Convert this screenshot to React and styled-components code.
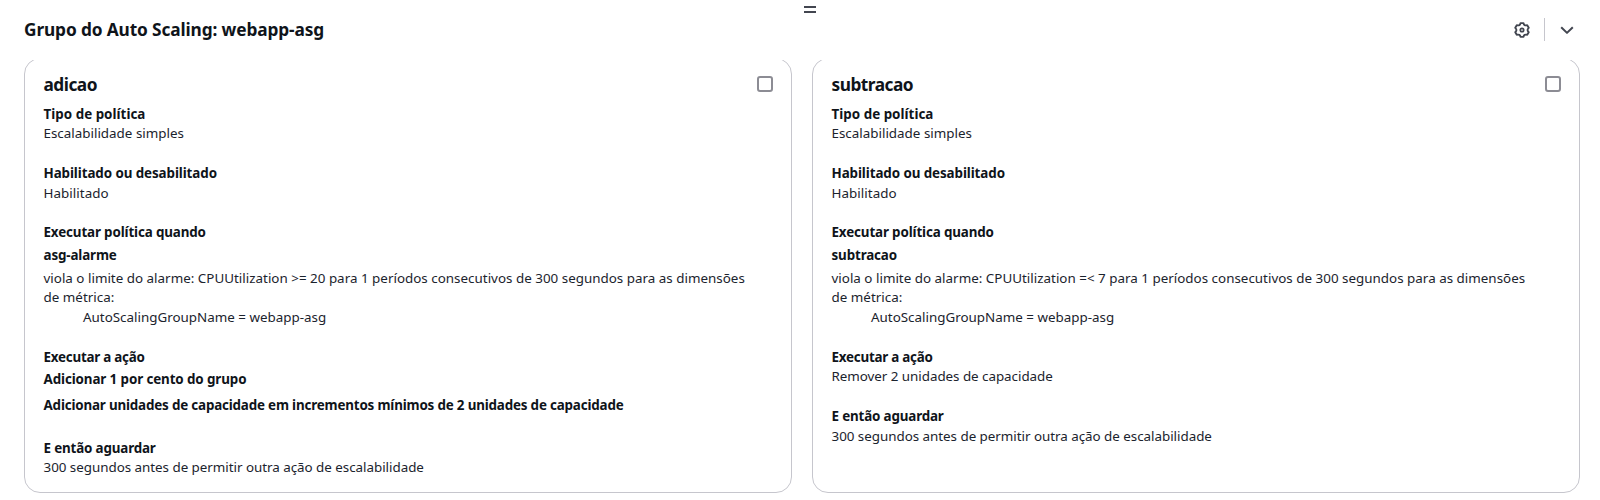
import React from "react";
import styled, { createGlobalStyle } from "styled-components";

const GlobalStyle = createGlobalStyle`
  *, *::before, *::after { box-sizing: border-box; }
  body {
    margin: 0;
    background: #fff;
    color: #0f141a;
    font-family: "Noto Sans", "Open Sans", sans-serif;
    font-size: 13.4px;
    line-height: 19.75px;
  }
`;

const Panel = styled.section`
  width: 1600px;
  height: 500px;
  padding: 6px 20px 0 24px;
  display: flex;
  flex-direction: column;
  overflow: hidden;
`;

const Handle = styled.div`
  width: 12px;
  height: 7px;
  margin-left: 780px;
  flex: none;
  border: solid #424650;
  border-width: 2px 0;
`;

const Header = styled.header`
  height: 47px;
  flex: none;
  display: flex;
  justify-content: space-between;
  padding-top: 5px;
`;

const PanelTitle = styled.h2`
  margin: 0;
  height: 24px;
  font-size: 17.3px;
  line-height: 24px;
  font-weight: 700;
  letter-spacing: -0.127px;
`;

const Actions = styled.div`
  display: flex;
  align-items: center;
  height: 23px;
  padding-right: 5.5px;
`;

const IconButton = styled.button`
  display: flex;
  padding: 0;
  border: 0;
  background: none;
  color: #424650;
`;

const Divider = styled.span`
  width: 1px;
  height: 23px;
  margin: 0 14px;
  background: #c6c6cd;
`;

const Cards = styled.div`
  flex: none;
  height: 440px;
  overflow: hidden;
  display: flex;
  gap: 20px;
`;

const Card = styled.article`
  flex: 1;
  height: 435px;
  margin-top: -2px;
  padding: 14px 18.5px 0;
  border: 1px solid #c6c6cd;
  border-radius: 16px;
`;

const CardHeader = styled.div`
  display: flex;
  justify-content: space-between;
  height: 31.6px;
`;

const CardTitle = styled.h3`
  margin: 0;
  font-size: 17.3px;
  line-height: 24px;
  font-weight: 700;
  letter-spacing: -0.5px;
`;

const Checkbox = styled.span`
  width: 16px;
  height: 16px;
  margin-top: 3px;
  border: 2px solid #8c8c94;
  border-radius: 3px;
`;

const Sections = styled.div`
  display: flex;
  flex-direction: column;
  gap: 19.75px;
`;

const Section = styled.div`
  display: flex;
  flex-direction: column;
`;

const Label = styled.div`
  font-weight: 700;
  letter-spacing: ${({ $spacing = -0.14 }) => $spacing}px;
`;

const Emphasis = styled(Label)`
  margin: 3px 0;
`;

const Value = styled.div`
  width: ${({ $wrap }) => ($wrap ? "712px" : "auto")};
  color: #1b232d;
  letter-spacing: ${({ $spacing = 0 }) => $spacing}px;
`;

const Dimension = styled(Value)`
  padding-left: 39.5px;
`;

const GearIcon = () => (
  <svg width="16" height="16" viewBox="-8 -8 16 16" fill="none" stroke="currentColor" strokeWidth="1.9" strokeLinejoin="round">
    <path d="M-1.5-6.9H1.5Q1.9-4 5.22-4.75L6.73-2.15Q4.4 0 6.73 2.15L5.22 4.75Q1.9 4 1.5 6.9H-1.5Q-1.9 4-5.22 4.75L-6.73 2.15Q-4.4 0-6.73-2.15L-5.22-4.75Q-1.9-4-1.5-6.9Z" />
    <circle r="1.7" strokeWidth="1.7" />
  </svg>
);

const ChevronIcon = () => (
  <svg width="16" height="16" viewBox="0 0 16 16" fill="none" stroke="currentColor" strokeWidth="2" strokeLinejoin="round">
    <path d="M2.2 5.2 8 10.9 13.8 5.2" />
  </svg>
);

function PolicyCard({ name, alarm, threshold, action }) {
  return (
    <Card>
      <CardHeader>
        <CardTitle>{name}</CardTitle>
        <Checkbox role="checkbox" aria-checked="false" />
      </CardHeader>
      <Sections>
        <Section>
          <Label $spacing={0.02}>Tipo de política</Label>
          <Value>Escalabilidade simples</Value>
        </Section>
        <Section>
          <Label $spacing={-0.09}>Habilitado ou desabilitado</Label>
          <Value $spacing={0.05}>Habilitado</Value>
        </Section>
        <Section>
          <Label>Executar política quando</Label>
          <Emphasis>{alarm}</Emphasis>
          <Value $wrap $spacing={0.008}>
            {`viola o limite do alarme: CPUUtilization ${threshold} para 1 períodos consecutivos de 300 segundos para as dimensões de métrica:`}
          </Value>
          <Dimension>AutoScalingGroupName = webapp-asg</Dimension>
        </Section>
        <Section>
          <Label $spacing={-0.24}>Executar a ação</Label>
          {action}
        </Section>
        <Section>
          <Label $spacing={-0.16}>E então aguardar</Label>
          <Value $spacing={-0.03}>300 segundos antes de permitir outra ação de escalabilidade</Value>
        </Section>
      </Sections>
    </Card>
  );
}

export default function App() {
  return (
    <>
      <GlobalStyle />
      <Panel>
        <Handle />
        <Header>
          <PanelTitle>Grupo do Auto Scaling: webapp-asg</PanelTitle>
          <Actions>
            <IconButton aria-label="Configurações"><GearIcon /></IconButton>
            <Divider />
            <IconButton aria-label="Recolher painel"><ChevronIcon /></IconButton>
          </Actions>
        </Header>
        <Cards>
          <PolicyCard
            name="adicao"
            alarm="asg-alarme"
            threshold=">= 20"
            action={
              <>
                <Emphasis $spacing={-0.11}>Adicionar 1 por cento do grupo</Emphasis>
                <Emphasis $spacing={-0.177}>
                  Adicionar unidades de capacidade em incrementos mínimos de 2 unidades de capacidade
                </Emphasis>
              </>
            }
          />
          <PolicyCard
            name="subtracao"
            alarm="subtracao"
            threshold="=< 7"
            action={<Value $spacing={-0.04}>Remover 2 unidades de capacidade</Value>}
          />
        </Cards>
      </Panel>
    </>
  );
}
